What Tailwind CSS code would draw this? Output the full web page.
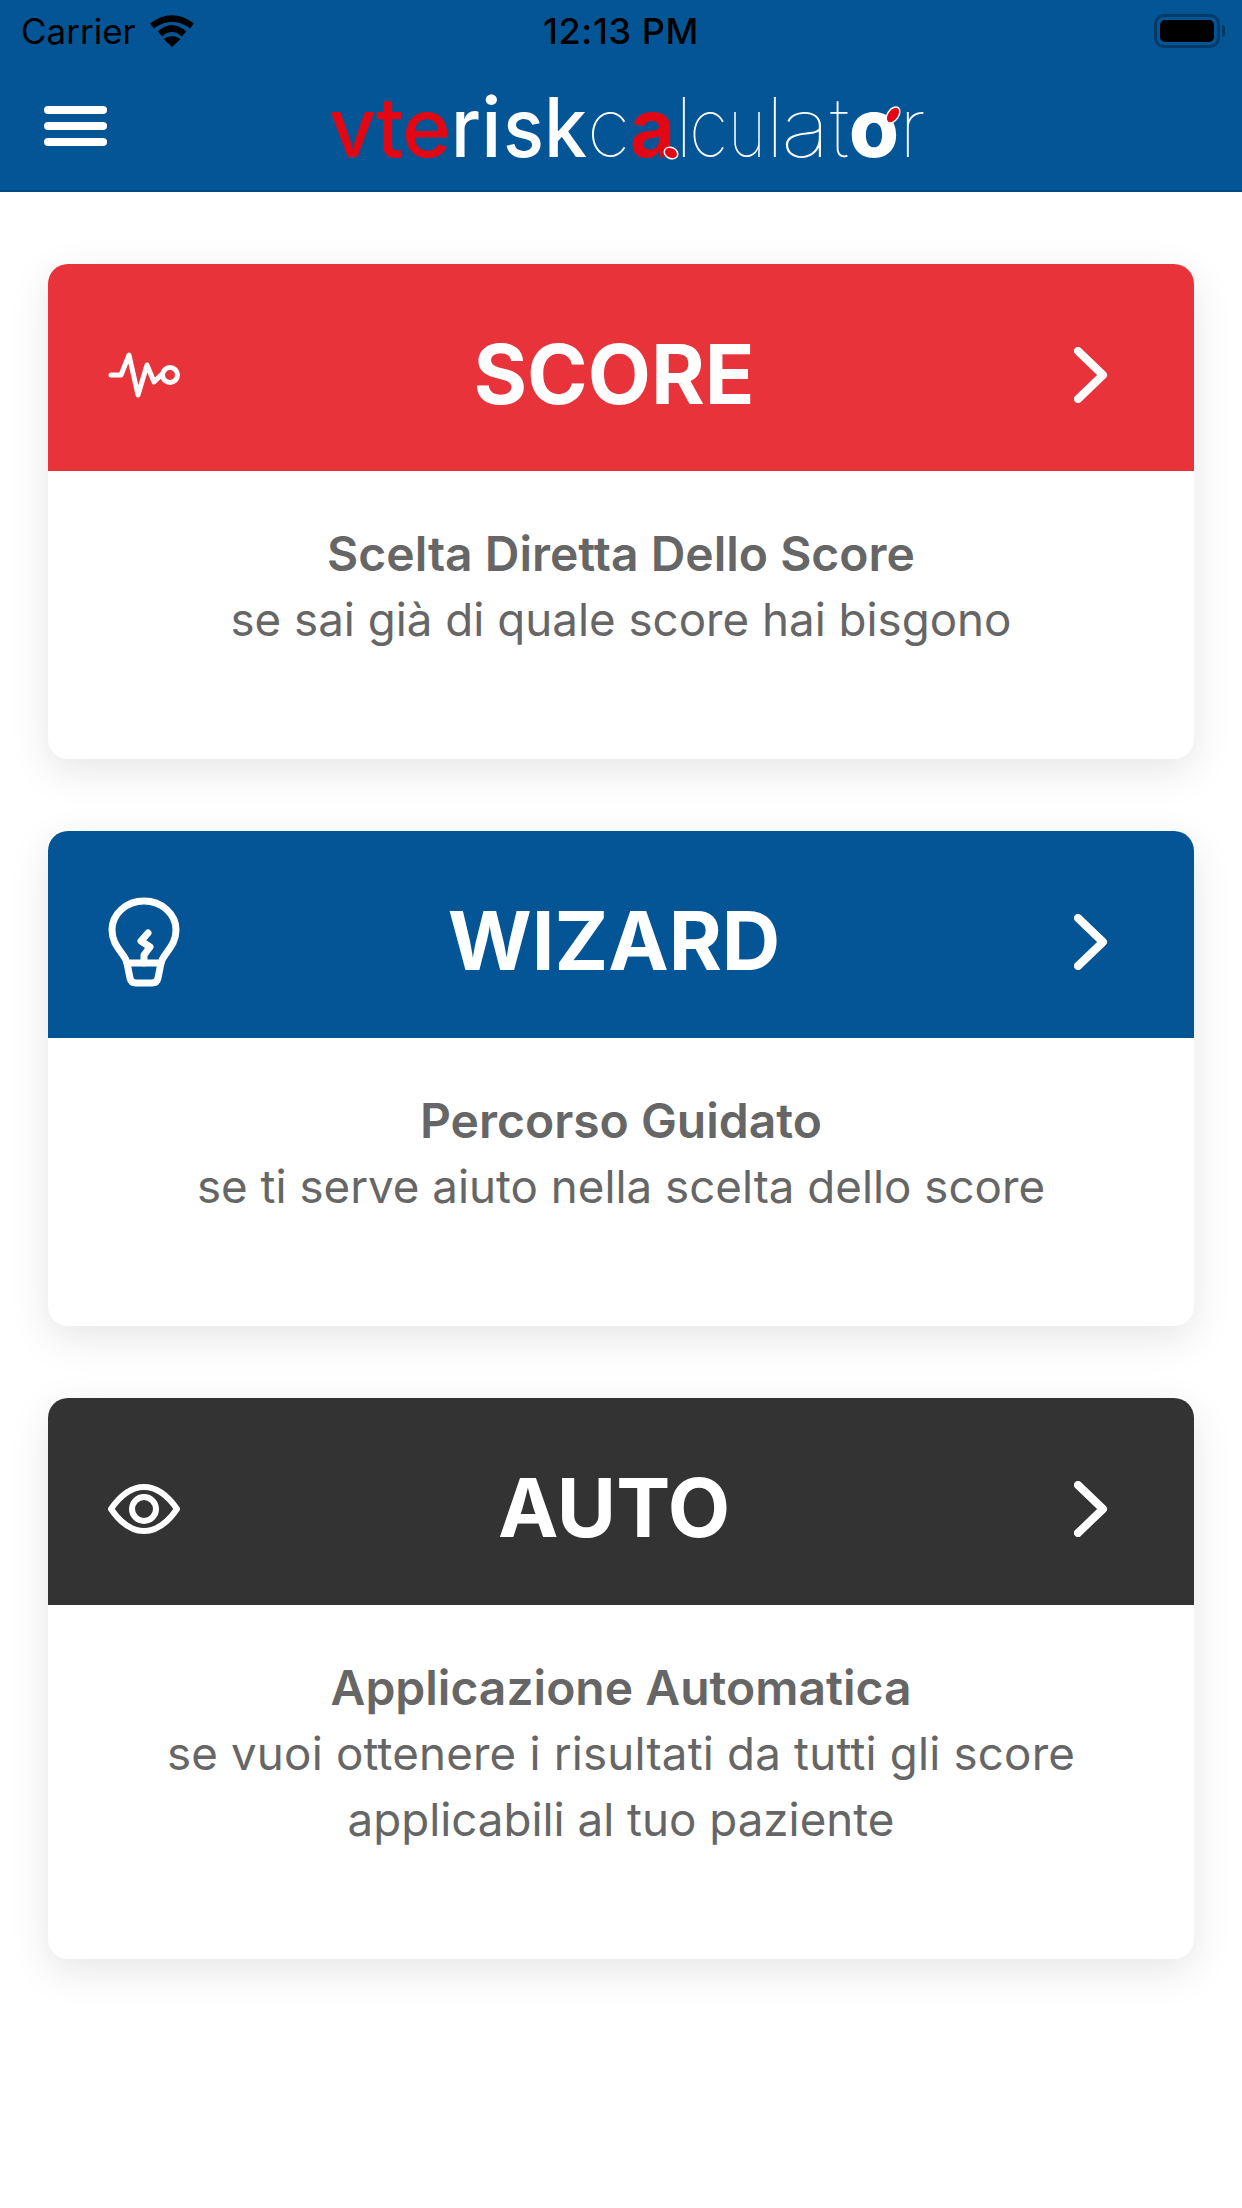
<!DOCTYPE html>
<html lang="it">
<head>
    <meta charset="UTF-8">
    <meta name="viewport" content="width=device-width, initial-scale=1.0">
    <title>VTE Risk Calculator</title>
    <script src="https://cdn.jsdelivr.net/npm/@tailwindcss/browser@4"></script>
</head>
<body class="bg-white font-['Inter',sans-serif] w-[1242px] h-[2208px] overflow-hidden">
    <!-- Header -->
    <header class="bg-[#045596] h-[192px] border-b-2 border-[#034a80]">
        <div class="h-[62px] flex items-center justify-between pl-[21px] pr-[17px] text-black">
            <div class="flex items-center gap-[14px] w-[300px]">
                <span class="text-[35px]">Carrier</span>
                <svg width="44" height="32" viewBox="0 0 44 32" fill="none" stroke="#000" stroke-width="6.500">
                    <path d="M2 11 Q22 -4 42 11"/>
                    <path d="M10 19 Q22 8 34 19"/>
                    <path d="M22 32 L13.500 24 Q22 18 30.500 24 Z" fill="#000" stroke="none"/>
                </svg>
            </div>
            <span class="text-[36px] font-medium tracking-[0.6px] -ml-[4px]">12:13 PM</span>
            <div class="w-[300px] flex justify-end items-center">
                <div class="w-[66px] h-[34px] rounded-[10px] border-[3px] border-[#033a66] p-[3px]">
                    <div class="w-full h-full rounded-[5px] bg-black"></div>
                </div>
                <div class="w-[3px] h-[12px] ml-[2px] rounded-r bg-[#033a66]"></div>
            </div>
        </div>
        <div class="h-[128px] flex items-center relative">
            <button class="ml-[44px] flex flex-col gap-[8px]">
                <span class="block w-[63px] h-[8px] rounded-full bg-white"></span>
                <span class="block w-[63px] h-[8px] rounded-full bg-white"></span>
                <span class="block w-[63px] h-[8px] rounded-full bg-white"></span>
            </button>
            <!-- logo, letters placed one by one -->
            <svg class="absolute left-0 top-[-62px]" width="1242" height="192" viewBox="0 0 1242 192">
                <g font-family="Inter, sans-serif" font-size="82" font-weight="500">
                    <text x="329" y="157" fill="#e30613">v</text>
                    <text x="376" y="157" fill="#e30613">t</text>
                    <text x="402" y="157" fill="#e30613" textLength="49" lengthAdjust="spacingAndGlyphs">e</text>
                    <text x="451" y="157" fill="#fff" textLength="29" lengthAdjust="spacingAndGlyphs">r</text>
                    <text x="481" y="157" fill="#fff">i</text>
                    <text x="503" y="157" fill="#fff" textLength="41" lengthAdjust="spacingAndGlyphs">s</text>
                    <text x="544" y="157" fill="#fff" textLength="43" lengthAdjust="spacingAndGlyphs">k</text>
                </g>
                <g font-family="Inter, sans-serif" font-size="82" font-weight="100" fill="#fff">
                    <text x="587" y="157" textLength="43" lengthAdjust="spacingAndGlyphs">c</text>
                    <text x="675" y="157">l</text>
                    <text x="689" y="157" textLength="39" lengthAdjust="spacingAndGlyphs">c</text>
                    <text x="728" y="157" textLength="38" lengthAdjust="spacingAndGlyphs">u</text>
                    <text x="766" y="157">l</text>
                    <text x="781" y="157" textLength="49" lengthAdjust="spacingAndGlyphs">a</text>
                    <text x="830" y="157" textLength="19" lengthAdjust="spacingAndGlyphs">t</text>
                    <text x="899" y="157">r</text>
                </g>
                <text x="630" y="157" font-family="Inter, sans-serif" font-size="82" font-weight="700" fill="#e30613" textLength="45" lengthAdjust="spacingAndGlyphs">a</text>
                <text x="849" y="157" font-family="Inter, sans-serif" font-size="82" font-weight="800" fill="#fff" textLength="50" lengthAdjust="spacingAndGlyphs">o</text>
                <ellipse cx="671" cy="153" rx="7" ry="5.500" transform="rotate(25 671 153)" fill="#e30613" stroke="#fff" stroke-width="1.500"/>
                <ellipse cx="893" cy="115" rx="9" ry="5.500" transform="rotate(-55 893 115)" fill="#e30613" stroke="#fff" stroke-width="1.500"/>
            </svg>
        </div>
    </header>

    <main class="px-[48px] pt-[72px] flex flex-col gap-[72px]">
        <!-- Score -->
        <section class="rounded-[20px] bg-white shadow-[0_12px_40px_rgba(0,0,0,0.1)] overflow-hidden">
            <div class="h-[207px] bg-[#e8333a] flex items-center pt-[14px] pl-[60px] pr-[86px]">
                <svg class="w-[72px] shrink-0" height="48" viewBox="0 0 72 48" fill="none" stroke="#fff" stroke-width="5" stroke-linecap="round" stroke-linejoin="round">
                    <path d="M3 24 H13 L21 4 L30 44 L39 14 L46 31 L53 24"/>
                    <circle cx="62" cy="24" r="7.500"/>
                </svg>
                <h2 class="flex-1 text-center text-[82px] leading-none font-bold text-white">SCORE</h2>
                <div class="w-[60px] flex justify-end shrink-0">
                    <svg width="34" height="56" viewBox="0 0 34 56" fill="none" stroke="#fff" stroke-width="8" stroke-linecap="round" stroke-linejoin="round"><path d="M4 4 L29 28 L4 52"/></svg>
                </div>
            </div>
            <div class="pt-[50px] pb-[106px] text-center text-[45.700px] leading-[66px] text-[#666]">
                <p class="font-semibold text-[48px]">Scelta Diretta Dello Score</p>
                <p>se sai già di quale score hai bisgono</p>
            </div>
        </section>

        <!-- Wizard -->
        <section class="rounded-[20px] bg-white shadow-[0_12px_40px_rgba(0,0,0,0.1)] overflow-hidden">
            <div class="h-[207px] bg-[#045596] flex items-center pt-[14px] pl-[60px] pr-[86px]">
                <svg class="w-[72px] shrink-0" height="90" viewBox="0 0 72 90" fill="none" stroke="#fff" stroke-width="7" stroke-linecap="round" stroke-linejoin="round">
                    <path d="M19 66 C17 56 4 50 4 33 A32 29 0 0 1 68 33 C68 50 55 56 53 66 Z"/>
                    <path d="M19 66 L22 81 Q23 86 28 86 H44 Q49 86 50 81 L53 66"/>
                    <path d="M40 36 L33 44 L42 50 L36 58 V66"/>
                </svg>
                <h2 class="flex-1 text-center text-[81px] leading-none font-bold text-white">WIZARD</h2>
                <div class="w-[60px] flex justify-end shrink-0">
                    <svg width="34" height="56" viewBox="0 0 34 56" fill="none" stroke="#fff" stroke-width="8" stroke-linecap="round" stroke-linejoin="round"><path d="M4 4 L29 28 L4 52"/></svg>
                </div>
            </div>
            <div class="pt-[50px] pb-[106px] text-center text-[45.700px] leading-[66px] text-[#666]">
                <p class="font-semibold text-[48px]">Percorso Guidato</p>
                <p>se ti serve aiuto nella scelta dello score</p>
            </div>
        </section>

        <!-- Auto -->
        <section class="rounded-[20px] bg-white shadow-[0_12px_40px_rgba(0,0,0,0.1)] overflow-hidden">
            <div class="h-[207px] bg-[#333333] flex items-center pt-[14px] pl-[60px] pr-[86px]">
                <svg class="w-[72px] shrink-0" height="50" viewBox="0 0 72 50" fill="none" stroke="#fff" stroke-width="6" stroke-linejoin="round">
                    <path d="M3 25 C14 9 25 3 36 3 C47 3 58 9 69 25 C58 41 47 47 36 47 C25 47 14 41 3 25 Z"/>
                    <circle cx="36" cy="25" r="12"/>
                </svg>
                <h2 class="flex-1 text-center text-[81px] leading-none font-bold text-white">AUTO</h2>
                <div class="w-[60px] flex justify-end shrink-0">
                    <svg width="34" height="56" viewBox="0 0 34 56" fill="none" stroke="#fff" stroke-width="8" stroke-linecap="round" stroke-linejoin="round"><path d="M4 4 L29 28 L4 52"/></svg>
                </div>
            </div>
            <div class="pt-[50px] pb-[106px] text-center text-[45.700px] leading-[66px] text-[#666]">
                <p class="font-semibold text-[48px]">Applicazione Automatica</p>
                <p class="tracking-[0.18px]">se vuoi ottenere i risultati da tutti gli score</p>
                <p>applicabili al tuo paziente</p>
            </div>
        </section>
    </main>
</body>
</html>
